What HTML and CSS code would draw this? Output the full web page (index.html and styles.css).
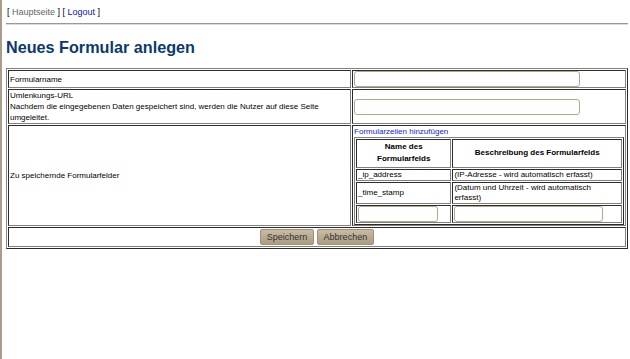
FILE: index.html
```html
<!DOCTYPE html>
<html>
<head>
<meta charset="utf-8">
<link rel="stylesheet" href="styles.css">
</head>
<body>
<div class="topnav">[ <a class="nav-home" href="#">Hauptseite</a> ] [ <a class="nav-link" href="#">Logout</a> ]</div>
<hr class="rule">
<h1 class="title">Neues Formular anlegen</h1>
<table class="form-table">
  <colgroup><col class="col-label"><col class="col-value"></colgroup>
  <tr>
    <td class="cell">Formularname</td>
    <td class="cell"><input class="text-input wide" type="text"></td>
  </tr>
  <tr>
    <td class="cell">Umlenkungs-URL<br>Nachdem die eingegebenen Daten gespeichert sind, werden die Nutzer auf diese Seite umgeleitet.</td>
    <td class="cell"><input class="text-input wide" type="text"></td>
  </tr>
  <tr>
    <td class="cell">Zu speichernde Formularfelder</td>
    <td class="cell top">
      <a class="add-link" href="#">Formularzeilen hinzufügen</a>
      <table class="inner-table">
        <tr>
          <th class="cell head name-col">Name des Formularfelds</th>
          <th class="cell head">Beschreibung des Formularfelds</th>
        </tr>
        <tr>
          <td class="cell data">_ip_address</td>
          <td class="cell data desc">(IP-Adresse - wird automatisch erfasst)</td>
        </tr>
        <tr>
          <td class="cell data">_time_stamp</td>
          <td class="cell data desc">(Datum und Uhrzeit - wird automatisch erfasst)</td>
        </tr>
        <tr>
          <td class="cell data"><input class="text-input small" type="text"></td>
          <td class="cell data"><input class="text-input medium" type="text"></td>
        </tr>
      </table>
    </td>
  </tr>
  <tr>
    <td class="cell center btn-row" colspan="2"><button class="btn">Speichern</button> <button class="btn">Abbrechen</button></td>
  </tr>
</table>
</body>
</html>
```

FILE: styles.css
```css
html {
  border-left: 2px solid #a89e88;
  min-height: 100%;
  box-sizing: border-box;
  background: #fff;
}
body {
  margin: 7px 2px 0 4px;
  font-family: "Liberation Sans", Arial, sans-serif;
  font-size: 8px;
  color: #000;
}
.topnav {
  font-size: 9px;
  line-height: 11px;
  padding-left: 1px;
}
.nav-home { color: #666; text-decoration: none; }
.nav-link { color: #1010c0; text-decoration: none; }
.rule {
  margin: 5px 0 0 0;
  border: 0;
  border-top: 1px solid #999;
  border-bottom: 1px solid #ddd;
  height: 0;
}
.title {
  font-size: 16.2px;
  color: #0b3a6e;
  margin: 12px 0 11px 0;
  line-height: 20px;
}
.form-table {
  width: 100%;
  border: 1px outset #808080;
  border-spacing: 1px;
}
.col-label { width: 55.6%; }
.cell {
  border: 1px inset #808080;
  padding: 0 1px;
  font-size: 8px;
  line-height: 11px;
  text-align: left;
  vertical-align: middle;
}
.top { vertical-align: top; }
.center { text-align: center; }
.btn-row { padding: 1px 0; }
.add-link {
  color: #2020d0;
  text-decoration: none;
  display: block;
}
.inner-table {
  width: 100%;
  border: 1px outset #808080;
  border-spacing: 1px;
  margin-top: 0;
}
.head {
  font-weight: bold;
  text-align: center;
  line-height: 12px;
  padding: 1px 1px 2px;
}
.name-col { width: 36%; }
.data { line-height: 10px; }
.desc { padding-right: 8px; }
.text-input {
  height: 16px;
  box-sizing: border-box;
  border: 1px solid #b4a88c;
  border-radius: 3px;
  background: #fff;
  margin: 0;
  padding: 0;
  display: block;
}
.wide { width: 226px; }
.small { width: 80px; }
.medium { width: 149px; }
.btn {
  font-family: "Liberation Sans", Arial, sans-serif;
  font-size: 9px;
  color: #333;
  background: linear-gradient(#c8bba4, #ab9c82);
  border: 1px solid #a09074;
  border-radius: 2px;
  height: 16px;
  padding: 0 6px;
  margin: 0;
}
```
